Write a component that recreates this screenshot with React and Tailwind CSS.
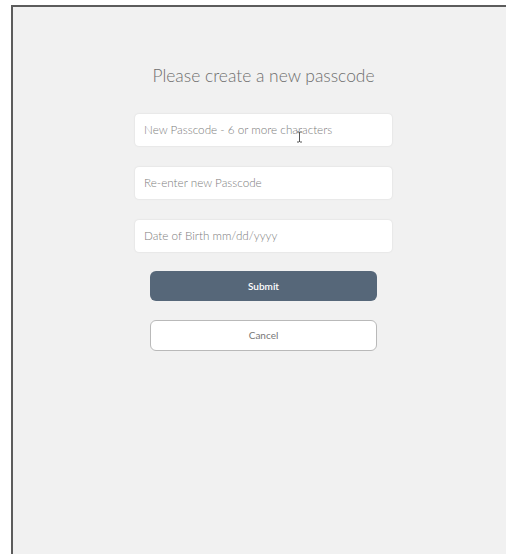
export default function App() {
  const fields = [
    "New Passcode - 6 or more characters",
    "Re-enter new Passcode",
    "Date of Birth mm/dd/yyyy",
  ];
  return (
    <div className="w-full h-[554px] bg-white pt-[5px] pl-[11px] overflow-hidden flex" style={{ fontFamily: "Lato, 'Open Sans', sans-serif" }}>
      <div className="flex-1 bg-[#f1f1f1] border-t-[2px] border-l-[2px] border-[#5c5c5c] flex flex-col items-center">
        <div className="w-[257px] ml-[8px] mt-[58px] flex flex-col">
          <h1 className="text-center text-[17.4px] font-light text-[#6e6e6e] leading-[22px]">
            Please create a new passcode
          </h1>
          <div className="mt-[27px] flex flex-col gap-[21px]">
            {fields.map((f, i) => (
              <div
                key={f}
                className="relative h-[32px] bg-white rounded-[4px] shadow-[0_0_2px_rgba(0,0,0,0.12)] flex items-center px-[9px]"
              >
                <span className="text-[11.7px] text-[#7d7d7d] font-light">{f}</span>
                {i === 0 && (
                  <svg className="absolute left-[161px] top-[17px]" width="7" height="12" viewBox="0 0 7 12">
                    <path d="M1 1h2M4 1h2M3.5 1v10M1 11h2M4 11h2" stroke="#555" strokeWidth="1" fill="none" />
                  </svg>
                )}
              </div>
            ))}
          </div>
          <div className="mt-[19px] px-[15px] flex flex-col gap-[19px]">
            <button className="h-[30px] rounded-[6px] bg-[#566779] text-white text-[10px] font-semibold">
              Submit
            </button>
            <button className="h-[31px] rounded-[6px] bg-white border border-[#b9b9b9] text-[#777] text-[10px]">
              Cancel
            </button>
          </div>
        </div>
      </div>
    </div>
  );
}
